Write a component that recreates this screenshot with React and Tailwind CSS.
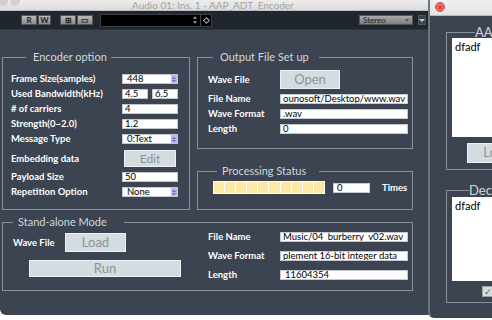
import React from 'react';

const label = 'text-white font-bold text-[9.5px] leading-[10px] whitespace-nowrap';

function Box({ children, className = '' }) {
  return (
    <div className={`h-[10px] bg-white border border-[#c4c8cc] text-black text-[9.5px] leading-[8px] pl-[2px] overflow-hidden whitespace-nowrap ${className}`}>
      {children}
    </div>
  );
}

function Select({ children }) {
  return (
    <div className="flex h-[10px] w-[56px] bg-white border border-[#c4c8cc] text-black text-[9.5px] leading-[8px] overflow-hidden">
      <span className="flex-1 pl-[4px] whitespace-nowrap">{children}</span>
      <span className="w-[6px] h-full bg-[#b8b9ea] flex flex-col items-center justify-center gap-[1px]">
        <span className="block w-0 h-0 border-x-[2px] border-x-transparent border-b-[2px] border-b-[#5e62c0]" />
        <span className="block w-0 h-0 border-x-[2px] border-x-transparent border-t-[2px] border-t-[#5e62c0]" />
      </span>
    </div>
  );
}

function Btn({ children, className = '' }) {
  return (
    <div className={`bg-[#d5dce1] border border-[#eef1f3] text-[#8c9298] text-[12px] flex items-center justify-center ${className}`}>
      {children}
    </div>
  );
}

function Group({ title, legendClass = '', className = '', children }) {
  return (
    <fieldset className={`border border-[#8a9299] ${className}`}>
      <legend className={`text-[11px] leading-[14px] text-[#d2d7dc] whitespace-nowrap ${legendClass}`}>{title}</legend>
      {children}
    </fieldset>
  );
}

function Row({ name, children, col = 'w-[111px]', className = '' }) {
  return (
    <div className={`flex items-center h-[10px] ${className}`}>
      <span className={`${label} ${col}`}>{name}</span>
      {children}
    </div>
  );
}

function ToolBtn({ children, className = '' }) {
  return (
    <div className={`h-[10px] bg-gradient-to-b from-[#b9b9b9] to-[#8c8c8c] border border-[#555] text-[#222] text-[8px] leading-[8px] font-bold flex items-center justify-center ${className}`}>
      {children}
    </div>
  );
}

export default function App() {
  return (
    <div className="relative w-[492px] h-[320px] bg-white overflow-hidden [font-family:Lato,'Open_Sans',sans-serif]">
      {/* main window */}
      <div className="absolute left-0 top-0 w-[430px] h-[315px] bg-[#3b4450] rounded-bl-[6px] overflow-hidden flex flex-col">
        <div className="h-[11px] bg-gradient-to-b from-[#ededed] to-[#dcdcdc] border-b border-[#bdbdbd] flex items-start relative">
          <span className="absolute left-[-2px] top-[-4px] w-[10px] h-[10px] rounded-full bg-[#cfcfcf]" />
          <span className="absolute left-[10px] top-[-4px] w-[10px] h-[10px] rounded-full bg-[#d2d2d2]" />
          <span className="ml-[132px] text-[10px] leading-[10px] text-[#a2a2a2] whitespace-nowrap">Audio 01: Ins. 1 - AAP_ADT_Encoder</span>
        </div>
        <div className="h-[19px] bg-[#1f262d] border-b border-[#2d353e] flex items-center">
          <ToolBtn className="ml-[21px] w-[16px]">R</ToolBtn>
          <ToolBtn className="ml-[1px] w-[13px]">W</ToolBtn>
          <ToolBtn className="ml-[9px] w-[16px]">⊞</ToolBtn>
          <ToolBtn className="ml-[1px] w-[16px]">▭</ToolBtn>
          <div className="ml-[7px] w-[112px] h-[13px] bg-black border border-[#3a3f45] flex items-center justify-end">
            <span className="flex flex-col gap-[2px] mr-[3px]">
              <span className="block w-0 h-0 border-x-[2px] border-x-transparent border-b-[3px] border-b-[#888]" />
              <span className="block w-0 h-0 border-x-[2px] border-x-transparent border-t-[3px] border-t-[#888]" />
            </span>
            <span className="w-[11px] h-full border-l border-[#444] flex items-center justify-center">
              <span className="block w-[5px] h-[5px] rotate-45 border border-[#aaa]" />
            </span>
          </div>
          <div className="ml-auto w-[54px] h-[10px] bg-gradient-to-b from-[#a9a9a9] to-[#7f7f7f] border border-[#555] flex items-center text-[8px] text-[#222] leading-[8px]">
            <span className="pl-[3px] flex-1">Stereo</span>
            <span className="block w-0 h-0 border-x-[2px] border-x-transparent border-t-[3px] border-t-[#555] mr-[3px]" />
          </div>
          <div className="ml-[5px] mr-[4px] w-[8px] h-[10px] bg-[#3b4148] border border-[#555] flex items-center justify-center">
            <span className="block w-0 h-0 border-x-[3px] border-x-transparent border-t-[3px] border-t-[#ccc]" />
          </div>
        </div>

        <div className="pl-[2px] pt-[20px] w-[413px]">
          <div className="flex gap-[7px] items-start">
            <Group title="Encoder option" legendClass="ml-[15px] pl-[7px] pr-[4px]" className="w-[188px] pl-[8px] pt-[10px] pb-[12px]">
              <div className="flex flex-col gap-[5px]">
                <Row name="Frame Size(samples)"><Select>448</Select></Row>
                <Row name="Used Bandwidth(kHz)">
                  <Box className="w-[26px]">4.5</Box>
                  <Box className="w-[26px] ml-[4px]">6.5</Box>
                </Row>
                <Row name="# of carriers"><Box className="w-[56px]">4</Box></Row>
                <Row name="Strength(0~2.0)"><Box className="w-[56px]">1.2</Box></Row>
                <Row name="Message Type"><Select>0:Text</Select></Row>
                <div className="flex items-center h-[17px] mt-[1px]">
                  <span className={`${label} w-[111px]`}>Embedding data</span>
                  <Btn className="ml-[2px] w-[52px] h-[17px]">Edit</Btn>
                </div>
                <Row name="Payload Size"><Box className="w-[56px]">50</Box></Row>
                <Row name="Repetition Option"><Select>None</Select></Row>
              </div>
            </Group>

            <div className="w-[216px] flex flex-col">
              <Group title="Output File Set up" legendClass="ml-[5px] pl-[7px] pr-[10px]" className="pl-[10px] pt-[6px] pb-[14px]">
                <div className="flex flex-col gap-[5px]">
                  <div className="flex items-center h-[19px]">
                    <span className={`${label} w-[72px]`}>Wave File</span>
                    <Btn className="w-[60px] h-[19px] text-[13px]">Open</Btn>
                  </div>
                  <Row name="File Name" col="w-[72px]"><Box className="w-[128px]">ounosoft/Desktop/www.wav</Box></Row>
                  <Row name="Wave Format" col="w-[72px]"><Box className="w-[128px]">.wav</Box></Row>
                  <Row name="Length" col="w-[72px]"><Box className="w-[128px]">0</Box></Row>
                </div>
              </Group>

              <Group title="Processing Status" legendClass="ml-[4px] pl-[5px] pr-[13px]" className="mt-[15px] pl-[15px] pt-[3px] pb-[15px]">
                <div className="flex items-center">
                  <div className="w-[112px] h-[13px] bg-white p-[1px] flex gap-[1px]">
                    {Array.from({ length: 10 }).map((_, i) => (
                      <span key={i} className="flex-1 bg-[#fde8a6]" />
                    ))}
                  </div>
                  <Box className="w-[37px] ml-[8px] pl-[3px]">0</Box>
                  <span className={`${label} ml-[12px]`}>Times</span>
                </div>
              </Group>
            </div>
          </div>

          <Group title="Stand-alone Mode" legendClass="ml-[10px] pl-[5px] pr-[17px]" className="mt-[5px] pb-[10px]">
            <div className="flex items-start">
              <div className="w-[194px] pt-[4px]">
                <div className="flex items-center h-[19px] pl-[10px]">
                  <span className={`${label} w-[52px]`}>Wave File</span>
                  <Btn className="w-[61px] h-[19px] text-[13px]">Load</Btn>
                </div>
                <Btn className="ml-[26px] mt-[8px] w-[152px] h-[17px] text-[13px]">Run</Btn>
              </div>
              <div className="pl-[11px] pt-[3px] flex flex-col gap-[9px]">
                <Row name="File Name" col="w-[72px]"><Box className="w-[128px]">Music/04_burberry_v02.wav</Box></Row>
                <Row name="Wave Format" col="w-[72px]"><Box className="w-[128px]">plement 16-bit integer data</Box></Row>
                <Row name="Length" col="w-[72px]"><Box className="w-[128px] pl-[4px]">11604354</Box></Row>
              </div>
            </div>
          </Group>
        </div>
      </div>

      {/* second window */}
      <div className="absolute left-[428px] top-0 w-[80px] h-[318px] bg-[#3b4450] border-l-2 border-[#6d757d] rounded-bl-[6px] overflow-hidden flex flex-col">
        <div className="h-[16px] bg-gradient-to-b from-[#f0f0f0] to-[#e2e2e2] border-b border-[#b8b8b8] relative">
          <span className="absolute left-[5px] top-[2px] w-[10px] h-[10px] rounded-full bg-[#f06b66] border border-[#d0504c] text-[#8a1d1a] text-[7px] leading-[8px] text-center">×</span>
        </div>
        <div className="pl-[16px] pt-[8px] w-[240px]">
          <Group title="AAP_ADT_Decoder" legendClass="ml-[23px] pl-[0px] pr-[4px] text-[13px] leading-[16px]" className="w-[200px] pl-[5px] pb-[6px]">
            <div className="-mt-[2px] h-[99px] bg-white text-black text-[11px] leading-[13px] pl-[3px] pt-[2px]">dfadf</div>
            <Btn className="ml-[15px] mt-[6px] w-[60px] h-[20px] text-[13px]">Load</Btn>
          </Group>
          <Group title="Decoded data" legendClass="ml-[17px] pl-[0px] pr-[4px] text-[13px] leading-[16px]" className="mt-[12px] w-[200px] pl-[5px] pb-[5px]">
            <div className="-mt-[1px] h-[84px] bg-white text-black text-[11px] leading-[13px] pl-[3px] pt-[2px]">dfadf</div>
            <div className="ml-[30px] mt-[5px] w-[11px] h-[11px] bg-[#d5dce1] border border-[#9aa1a7] text-[#555] text-[9px] leading-[9px] text-center">✓</div>
          </Group>
        </div>
      </div>
    </div>
  );
}
